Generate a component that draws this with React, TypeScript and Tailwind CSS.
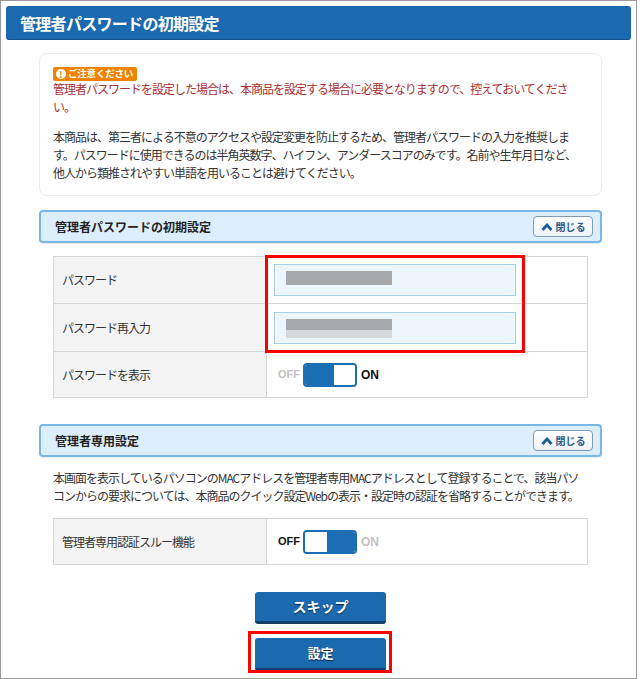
function CloseButton() {
  return (
    <button className="flex items-center justify-center gap-[3px] w-[60px] h-[21px] rounded-[4px] border border-[#7f9bb5] bg-gradient-to-b from-white to-[#eef3f8] text-[#2a5c8c] text-[10px] font-bold leading-none">
      <svg width="12" height="8" viewBox="0 0 12 8">
        <polyline points="1.5,7 6,2 10.5,7" fill="none" stroke="#1d5d9b" strokeWidth="2.8" />
      </svg>
      <span>閉じる</span>
    </button>
  );
}

function SectionHeader({ title }: { title: string }) {
  return (
    <div className="flex items-center justify-between h-[33px] pl-[14px] pr-[7px] rounded-[4px] border-2 border-[#79b8e6] bg-[#dcedfb] shadow-[0_1px_1px_rgba(0,0,0,0.08)]">
      <span className="text-[12px] font-bold text-[#222]">{title}</span>
      <CloseButton />
    </div>
  );
}

function Toggle({ on }: { on: boolean }) {
  return (
    <div className="flex items-center h-full pl-[11px]">
      <span className={`font-['Liberation_Sans',sans-serif] text-[11px] font-bold ${on ? "text-[#c2c2c2]" : "text-[#111]"}`}>
        OFF
      </span>
      <div className="ml-[3px] flex w-[54px] h-[24px] rounded-[4px] border-2 border-[#1b6db4] overflow-hidden">
        {on ? (
          <>
            <div className="w-[29px] bg-[#1b6db4]" />
            <div className="flex-1 bg-white" />
          </>
        ) : (
          <>
            <div className="w-[22px] bg-white" />
            <div className="flex-1 bg-[#1b6db4]" />
          </>
        )}
      </div>
      <span className={`ml-[4px] font-['Liberation_Sans',sans-serif] text-[12px] font-bold ${on ? "text-[#111]" : "text-[#c2c2c2]"}`}>
        ON
      </span>
    </div>
  );
}

function BlurInput({ second }: { second?: boolean }) {
  return (
    <div className="relative w-[242px] h-[32px] border border-[#a9d0ea] bg-[#eef6fd]">
      {second ? (
        <>
          <div className="absolute left-[11px] top-[6px] w-[106px] h-[12px] bg-[#a7a9ad] blur-[0.6px]" />
          <div className="absolute left-[11px] top-[17px] w-[106px] h-[8px] bg-[#d6d9de] blur-[0.6px]" />
        </>
      ) : (
        <div className="absolute left-[11px] top-[6px] w-[106px] h-[14px] bg-[#a7a9ad] blur-[0.6px]" />
      )}
    </div>
  );
}

export default function App() {
  const row = "flex border-b border-[#d6d6d6]";
  const label = "w-[213px] shrink-0 flex items-center pl-[8px] bg-[#f4f4f4] border-r border-[#d6d6d6] text-[12px] tracking-[-1px] text-[#333]";

  return (
    <div className="w-[637px] h-[679px] border border-[#9a9a9a] bg-white p-[5px] font-['Noto_Sans_CJK_JP',sans-serif] text-[#222]">
      <div className="h-[34px] flex items-center pl-[14px] rounded-[3px] bg-[#1b6ab0] border-b border-[#135089]">
        <span className="text-white text-[16px] font-bold tracking-[-0.7px]">管理者パスワードの初期設定</span>
      </div>

      <div className="w-[563px] ml-[33px]">
        <div className="mt-[13px] h-[143px] rounded-[8px] border border-[#ececec] pt-[13px] pl-[13px]">
          <div className="flex w-fit items-center gap-[2px] h-[14px] rounded-[2px] bg-[#f08300] pl-[3px] pr-[4px] whitespace-nowrap">
            <span className="flex items-center justify-center w-[10px] h-[10px] rounded-full bg-white text-[#f08300] text-[9px] font-bold leading-none">!</span>
            <span className="text-white text-[9.5px] font-bold leading-none tracking-[-0.2px]">ご注意ください</span>
          </div>
          <div className="mt-[-1px] text-[12px] tracking-[-1px] leading-[18px] text-[#a82f33]">
            <div className="whitespace-nowrap">管理者パスワードを設定した場合は、本商品を設定する場合に必要となりますので、控えておいてくださ</div>
            <div className="whitespace-nowrap">い。</div>
          </div>
          <div className="mt-[12px] text-[12px] tracking-[-1px] leading-[18px] text-[#333]">
            <div className="whitespace-nowrap">本商品は、第三者による不意のアクセスや設定変更を防止するため、管理者パスワードの入力を推奨しま</div>
            <div className="whitespace-nowrap">す。パスワードに使用できるのは半角英数字、ハイフン、アンダースコアのみです。名前や生年月日など、</div>
            <div className="whitespace-nowrap">他人から類推されやすい単語を用いることは避けてください。</div>
          </div>
        </div>

        <div className="mt-[14px]">
          <SectionHeader title="管理者パスワードの初期設定" />
        </div>

        <div className="relative mt-[13px] mx-[14px] border-t border-x border-[#d6d6d6]">
          <div className={`${row} h-[47px]`}>
            <div className={label}>パスワード</div>
            <div className="flex items-center pl-[7px]">
              <BlurInput />
            </div>
          </div>
          <div className={`${row} h-[48px]`}>
            <div className={label}>パスワード再入力</div>
            <div className="flex items-center pl-[7px]">
              <BlurInput second />
            </div>
          </div>
          <div className={`${row} h-[46px]`}>
            <div className={label}>パスワードを表示</div>
            <Toggle on />
          </div>
          <div className="absolute left-[211px] top-[-2px] w-[260px] h-[98px] border-[3px] border-[#ff0000]" />
        </div>

        <div className="mt-[26px]">
          <SectionHeader title="管理者専用設定" />
        </div>

        <div className="mt-[12px] pl-[14px] text-[12px] tracking-[-1px] leading-[18px] text-[#333]">
          <div className="whitespace-nowrap">本画面を表示しているパソコンのMACアドレスを管理者専用MACアドレスとして登録することで、該当パソ</div>
          <div className="whitespace-nowrap">コンからの要求については、本商品のクイック設定Webの表示・設定時の認証を省略することができます。</div>
        </div>

        <div className="mt-[13px] mx-[14px] border-t border-x border-[#d6d6d6]">
          <div className={`${row} h-[46px]`}>
            <div className={label}>管理者専用認証スルー機能</div>
            <Toggle on={false} />
          </div>
        </div>

        <div className="mt-[27px] flex flex-col items-center gap-[14px]">
          <button className="w-[131px] h-[32px] rounded-[3px] bg-[#1b6ab0] border-b-[3px] border-[#123f6b] text-white text-[14px] font-bold [text-shadow:0_1px_1px_rgba(0,0,0,0.7)]">
            スキップ
          </button>
          <div className="relative">
            <button className="w-[131px] h-[33px] rounded-[3px] bg-[#1b6ab0] border-b-[3px] border-[#123f6b] text-white text-[13px] font-bold [text-shadow:0_1px_1px_rgba(0,0,0,0.7)]">
              設定
            </button>
            <div className="absolute left-[-7px] top-[-7px] w-[144px] h-[42px] border-[3px] border-[#ff0000]" />
          </div>
        </div>
      </div>
    </div>
  );
}
